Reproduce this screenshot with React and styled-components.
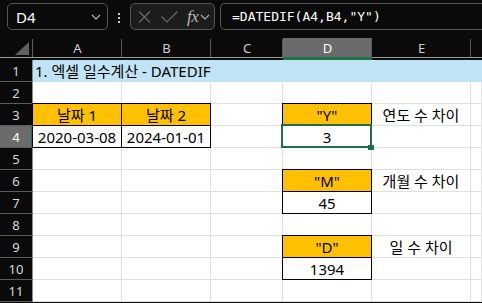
import React from "react";
import styled, { createGlobalStyle, css } from "styled-components";

const GlobalStyle = createGlobalStyle`
  html, body {
    margin: 0;
    background: #0a0a0a;
    overflow: hidden;
  }
`;

const Page = styled.div`
  width: 482px;
  height: 303px;
  overflow: hidden;
  background: #0a0a0a;
  font-family: "Noto Sans", "Noto Sans CJK KR", sans-serif;
`;

const Toolbar = styled.div`
  display: flex;
  align-items: flex-start;
  height: 38px;
  padding: 3px 0 0 7px;
  box-sizing: border-box;
`;

const Box = styled.div`
  display: flex;
  align-items: center;
  height: 27px;
  box-sizing: border-box;
  border: 1px solid #555;
  border-radius: 5px;
  background: ${(p) => p.$bg || "#0a0a0a"};
  flex: none;
`;

const NameBox = styled(Box)`
  width: 101px;
  padding: 0 6px 0 8px;
  justify-content: space-between;
  color: #fff;
  font-size: 15px;
`;

const Dots = styled.div`
  flex: none;
  width: 22px;
  display: flex;
  flex-direction: column;
  align-items: center;
  gap: 2px;
  padding-top: 10px;
  span {
    width: 2px;
    height: 2px;
    background: #ccc;
  }
`;

const FnBox = styled(Box)`
  width: 85px;
  padding: 0 0 0 7px;
  color: #777;
`;

const FxText = styled.span`
  font-family: "Liberation Serif", serif;
  font-style: italic;
  font-size: 17px;
  color: #bbb;
  margin: 0 2px 0 9px;
  letter-spacing: -0.5px;
`;

const FormulaBox = styled(Box)`
  margin-left: 5px;
  width: 280px;
  padding-left: 11px;
  color: #fff;
  font-family: "DejaVu Sans Mono", monospace;
  font-size: 13px;
  border-right: none;
  border-radius: 5px 0 0 5px;
`;

const Sheet = styled.div`
  display: grid;
  grid-template-columns: 33px 89px 89px 72px 89px 99px 1fr;
  grid-auto-rows: 22px;
  background: #fff;
`;

const ColHead = styled.div`
  background: ${(p) => (p.$active ? "#6b6b6b" : "#0a0a0a")};
  color: ${(p) => (p.$active ? "#fff" : "#cfcfcf")};
  font-size: 13px;
  display: flex;
  align-items: center;
  justify-content: center;
  box-sizing: border-box;
  border-bottom: 2px solid ${(p) => (p.$active ? "#1e7145" : "#0a0a0a")};
  box-shadow: inset 0 -1px 0 ${(p) => (p.$active ? "#1e7145" : "#9a9a9a")};
  position: relative;
  &::after {
    content: "";
    position: absolute;
    right: 0;
    top: 1px;
    bottom: 1px;
    width: 1px;
    background: ${(p) => (p.$last ? "transparent" : "#5a5a5a")};
  }
`;

const Corner = styled(ColHead)`
  align-items: flex-end;
  justify-content: flex-end;
  padding: 0 4px 3px 0;
  &::after {
    background: #5a5a5a;
  }
`;

const RowHead = styled.div`
  background: ${(p) => (p.$active ? "#6b6b6b" : "#0a0a0a")};
  color: ${(p) => (p.$active ? "#fff" : "#d8d8d8")};
  font-size: 13px;
  display: flex;
  align-items: center;
  justify-content: center;
  box-sizing: border-box;
  border-bottom: 1px solid #5a5a5a;
  border-right: 1px solid ${(p) => (p.$active ? "#1e7145" : "#8a8a8a")};
  ${(p) => p.$active && css`box-shadow: inset -1px 0 0 #1e7145;`}
`;

const Cell = styled.div`
  box-sizing: border-box;
  display: flex;
  align-items: center;
  justify-content: ${(p) => p.$align || "center"};
  padding: ${(p) => (p.$align === "flex-start" ? "0 0 0 2px" : "0")};
  font-size: 15px;
  color: #000;
  white-space: nowrap;
  background: ${(p) => p.$fill || "#fff"};
  grid-column: ${(p) => (p.$span ? `span ${p.$span}` : "auto")};
  border-right: 1px solid ${(p) => (p.$boxed ? "#000" : p.$fill ? p.$fill : "#e1e1e1")};
  border-bottom: 1px solid ${(p) => (p.$boxed ? "#000" : p.$fill ? p.$fill : "#e1e1e1")};
  position: relative;
  ${(p) =>
    p.$boxed &&
    css`
      z-index: 1;
      box-shadow: -1px 0 0 #000, 0 -1px 0 #000, -1px -1px 0 #000;
    `}
  ${(p) =>
    p.$selected &&
    css`
      z-index: 2;
      &::after {
        content: "";
        position: absolute;
        top: -2px;
        left: -2px;
        right: -1px;
        bottom: -1px;
        border: 2px solid #1e7145;
      }
      &::before {
        content: "";
        position: absolute;
        right: -3px;
        bottom: -3px;
        width: 6px;
        height: 5px;
        background: #1e7145;
        z-index: 3;
      }
    `}
`;

const Chevron = ({ color = "#bbb" }) => (
  <svg width="10" height="6" viewBox="0 0 10 6">
    <polyline points="1,1 5,5 9,1" fill="none" stroke={color} strokeWidth="1.2" />
  </svg>
);

const orange = "#ffc000";
const blue = "#c0e4f5";
const cols = ["A", "B", "C", "D", "E"];

// row number -> cells for columns A..F
const rows = {
  1: [{ text: "1. 엑셀 일수계산 - DATEDIF", fill: blue, span: 6, align: "flex-start" }],
  3: [
    { text: "날짜 1", fill: orange, boxed: true },
    { text: "날짜 2", fill: orange, boxed: true },
    {},
    { text: '"Y"', fill: orange, boxed: true },
    { text: "연도 수 차이" },
    {},
  ],
  4: [
    { text: "2020-03-08", boxed: true },
    { text: "2024-01-01", boxed: true },
    {},
    { text: "3", selected: true },
    {},
    {},
  ],
  6: [{}, {}, {}, { text: '"M"', fill: orange, boxed: true }, { text: "개월 수 차이" }, {}],
  7: [{}, {}, {}, { text: "45", boxed: true }, {}, {}],
  9: [{}, {}, {}, { text: '"D"', fill: orange, boxed: true }, { text: "일 수 차이" }, {}],
  10: [{}, {}, {}, { text: "1394", boxed: true }, {}, {}],
};

const emptyRow = [{}, {}, {}, {}, {}, {}];

export default function App() {
  return (
    <Page>
      <GlobalStyle />
      <Toolbar>
        <NameBox>
          <span>D4</span>
          <Chevron />
        </NameBox>
        <Dots>
          <span />
          <span />
          <span />
        </Dots>
        <FnBox $bg="#1c1c1c">
          <svg width="13" height="12" viewBox="0 0 13 12">
            <path d="M1 0.5 L12 11.5 M12 0.5 L1 11.5" stroke="#6a6a6a" strokeWidth="1.2" fill="none" />
          </svg>
          <svg width="17" height="12" viewBox="0 0 17 12" style={{ marginLeft: 10 }}>
            <polyline points="0.5,5.5 6,11 16.5,0.5" stroke="#6a6a6a" strokeWidth="1.2" fill="none" />
          </svg>
          <FxText>fx</FxText>
          <Chevron color="#aaa" />
        </FnBox>
        <FormulaBox>=DATEDIF(A4,B4,"Y")</FormulaBox>
      </Toolbar>
      <Sheet>
        <Corner>
          <svg width="14" height="13" viewBox="0 0 14 13">
            <polygon points="14,0 14,13 0,13" fill="#5f5f5f" />
          </svg>
        </Corner>
        {cols.map((c) => (
          <ColHead key={c} $active={c === "D"}>
            {c}
          </ColHead>
        ))}
        <ColHead $last />
        {Array.from({ length: 11 }, (_, i) => i + 1).map((r) => (
          <React.Fragment key={r}>
            <RowHead $active={r === 4}>{r}</RowHead>
            {(rows[r] || emptyRow).map((cell, j) => (
              <Cell
                key={j}
                $fill={cell.fill}
                $boxed={cell.boxed}
                $selected={cell.selected}
                $span={cell.span}
                $align={cell.align}
              >
                {cell.text}
              </Cell>
            ))}
          </React.Fragment>
        ))}
      </Sheet>
    </Page>
  );
}
